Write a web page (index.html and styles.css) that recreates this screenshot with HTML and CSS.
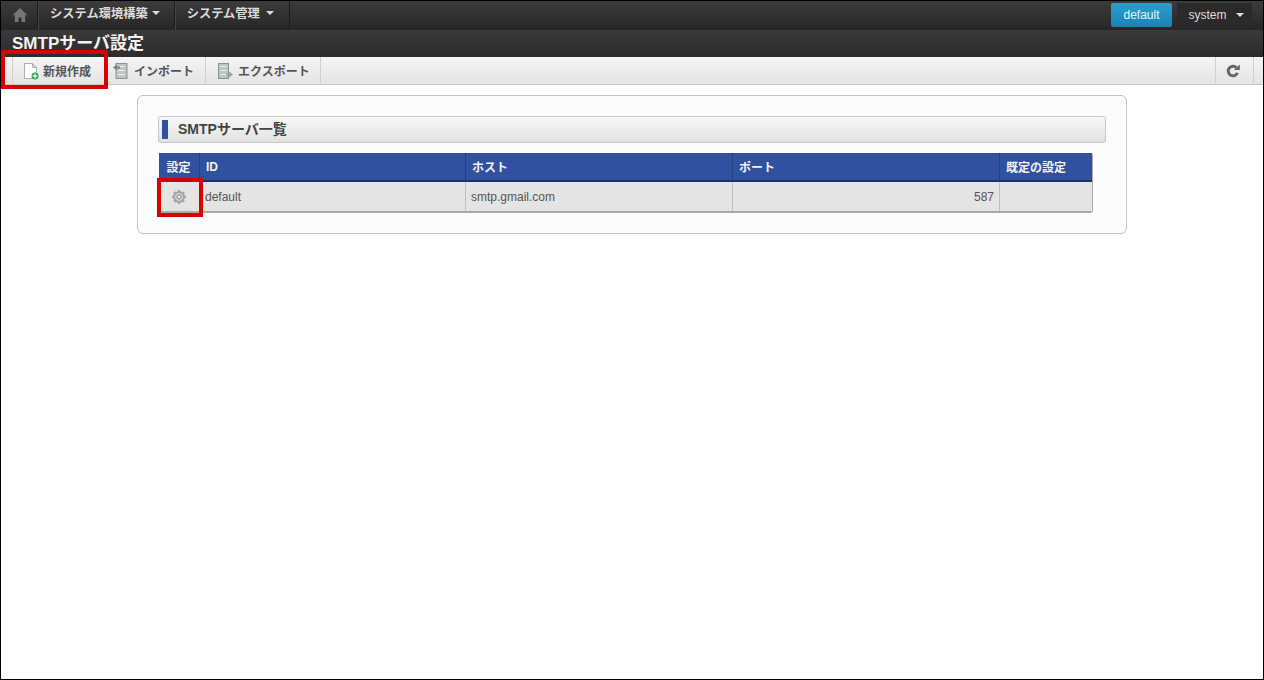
FILE: index.html
```html
<!DOCTYPE html>
<html lang="ja">
<head>
<meta charset="utf-8">
<title>SMTPサーバ設定</title>
<link rel="stylesheet" href="styles.css">
</head>
<body>
<div class="frame">
  <header class="topbar">
    <a class="nav-home">
      <svg width="16" height="16" viewBox="0 0 16 16"><path fill="#757575" d="M8 1 15.500 8.200h-2.300V15H9.500V10.500H6.500V15H2.800V8.200H.5z"/></svg>
    </a>
    <a class="nav-item">システム環境構築<span class="caret"></span></a>
    <a class="nav-item">システム管理<span class="caret"></span></a>
    <div class="nav-right">
      <a class="tenant">default</a>
      <a class="user">system<span class="caret"></span></a>
    </div>
  </header>
  <div class="titlebar"><h1>SMTPサーバ設定</h1></div>
  <div class="toolbar">
    <a class="tool tool-new">
      <svg width="16" height="18" viewBox="0 0 16 18"><path fill="#fbfbfb" stroke="#a9b0b0" d="M1.500 1.500h8l4 4v11h-12z"/><path fill="#dfe5e5" stroke="#a9b0b0" d="M9.500 1.500v4h4z"/><circle cx="12" cy="14" r="3.500" fill="#2fa84a"/><path stroke="#d9f5dd" stroke-width="1.300" d="M12 11.800v4.400M9.800 14h4.400"/></svg>
      新規作成
      <span class="mark mark-new"></span>
    </a>
    <a class="tool tool-import">
      <svg width="16" height="18" viewBox="0 0 16 18"><rect x="3" y="1.500" width="11" height="15" fill="#bfc5c1" stroke="#8b938f"/><path stroke="#eef0ee" d="M5 4.500h7M5 8.500h7M5 12.500h7"/><path fill="#7a827e" d="M0 5.500 4 2.500v2h3v2H4v2z"/></svg>
      インポート
    </a>
    <a class="tool tool-export">
      <svg width="16" height="18" viewBox="0 0 16 18"><rect x="1.500" y="1.500" width="10" height="15" fill="#bfc5c1" stroke="#8b938f"/><path stroke="#eef0ee" d="M3.500 4.500h6M3.500 8.500h6M3.500 12.500h6"/><path fill="#9aa79d" d="M16 12.500 12 9.500v2H9v2h3v2z"/></svg>
      エクスポート
    </a>
    <a class="tool-reload">
      <svg width="14" height="14" viewBox="0 0 14 14"><path fill="none" stroke="#666" stroke-width="3" d="M11.500 8.800A4.800 4.800 0 1 1 10.400 3.600"/><path fill="#666" d="M8 6h5.800V.4z"/></svg>
    </a>
  </div>
  <main class="content">
    <section class="card">
      <h2 class="section-title">SMTPサーバ一覧</h2>
      <div class="table-wrap">
        <table class="grid">
          <colgroup>
            <col class="c-set"><col class="c-id"><col class="c-host"><col class="c-port"><col class="c-default">
          </colgroup>
          <thead>
            <tr><th>設定</th><th>ID</th><th>ホスト</th><th>ポート</th><th>既定の設定</th></tr>
          </thead>
          <tbody>
            <tr>
              <td class="cell-icon">
                <svg width="16" height="16" viewBox="0 0 16 16"><g fill="#a6a6a6"><circle cx="8" cy="8" r="5.600"/><circle cx="8" cy="2.700" r="1.800"/><circle cx="8" cy="13.300" r="1.800"/><circle cx="2.700" cy="8" r="1.800"/><circle cx="13.300" cy="8" r="1.800"/><circle cx="4.250" cy="4.250" r="1.800"/><circle cx="11.750" cy="4.250" r="1.800"/><circle cx="4.250" cy="11.750" r="1.800"/><circle cx="11.750" cy="11.750" r="1.800"/></g><circle cx="8" cy="8" r="3.400" fill="none" stroke="#e4e4e4" stroke-width="1"/><circle cx="8" cy="8" r="1.300" fill="#e4e4e4"/></svg>
                <span class="mark mark-gear"></span>
              </td>
              <td>default</td>
              <td>smtp.gmail.com</td>
              <td class="num">587</td>
              <td></td>
            </tr>
          </tbody>
        </table>
      </div>
    </section>
  </main>
</div>
</body>
</html>
```
FILE: styles.css
```css
* { box-sizing: border-box; }
html, body { margin: 0; height: 100%; }
body {
  font-family: "Liberation Sans", "Noto Sans CJK JP", sans-serif;
  background: #fff;
  color: #444;
  overflow: hidden;
}
a { color: inherit; text-decoration: none; }
.frame {
  height: 680px;
  border: 1px solid #000;
  display: flex;
  flex-direction: column;
  background: #fff;
}
.topbar {
  height: 29px;
  flex: none;
  display: flex;
  align-items: stretch;
  background: linear-gradient(#3c3c3c, #262626);
  color: #ddd;
  font-size: 12.25px;
  font-weight: bold;
}
.nav-home {
  width: 37px;
  display: flex;
  align-items: center;
  justify-content: center;
  padding: 0 0 2px 2px;
  border-right: 1px solid #1c1c1c;
}
.nav-item {
  display: flex;
  align-items: center;
  padding: 0 14px 5px 11px;
  border-right: 1px solid #1c1c1c;
  border-left: 1px solid #444;
  color: #dcdcdc;
}
.caret {
  display: inline-block;
  margin-left: 4px;
  border-top: 4px solid #ddd;
  border-left: 4px solid transparent;
  border-right: 4px solid transparent;
}
.nav-item + .nav-item { padding-right: 15px; }
.nav-item + .nav-item .caret { margin-left: 6px; }
.nav-right {
  margin-left: auto;
  display: flex;
  align-items: flex-start;
  padding: 2px 11px 0 0;
  gap: 5px;
  font-size: 12px;
  font-weight: normal;
}
.tenant {
  width: 61px;
  height: 24px;
  display: flex;
  align-items: center;
  justify-content: center;
  background: linear-gradient(#2a9fcf, #1a82b4);
  border-radius: 2px;
  color: #e8f4fa;
}
.user {
  width: 75px;
  height: 25px;
  display: flex;
  align-items: center;
  justify-content: center;
  background: #2a2a2a;
  color: #ddd;
  padding: 0 0 1px 3px;
}
.user .caret { margin-left: 9px; }
.titlebar {
  height: 27px;
  flex: none;
  background: linear-gradient(#3a3a3a, #2b2b2b);
  display: flex;
  align-items: center;
  padding: 0 0 4px 11px;
}
.titlebar h1 {
  margin: 0;
  font-size: 17px;
  font-weight: bold;
  color: #f2f2f2;
}
.toolbar {
  height: 28px;
  flex: none;
  display: flex;
  align-items: stretch;
  background: linear-gradient(#f4f4f4, #e4e4e4);
  border-bottom: 1px solid #c8c8c8;
  padding-left: 11px;
  font-size: 12px;
  font-weight: bold;
  color: #555;
}
.tool {
  position: relative;
  display: flex;
  align-items: center;
  gap: 4px;
  border-right: 1px solid #cfcfcf;
}
.tool-new { width: 94px; padding-left: 10px; border-left: 1px solid #cfcfcf; }
.tool-import { width: 100px; padding-left: 7px; gap: 5px; }
.tool-export { width: 115px; padding-left: 11px; gap: 5px; }
.tool-reload {
  margin-left: auto;
  width: 39px;
  margin-right: 9px;
  padding-right: 3px;
  display: flex;
  align-items: center;
  justify-content: center;
  border-left: 1px solid #cfcfcf;
  border-right: 1px solid #cfcfcf;
}
.mark {
  position: absolute;
  border: 4px solid #d90000;
  pointer-events: none;
}
.mark-new { left: -12px; top: -7px; width: 107px; height: 39px; }
.content { flex: 1; padding: 10px 136px 0; }
.card {
  width: 990px;
  height: 139px;
  background: #fcfcfe;
  border: 1px solid #c4c4c4;
  border-radius: 6px;
  padding: 20px 20px 0 20px;
}
.section-title {
  margin: 0;
  height: 27px;
  border: 1px solid #c8c8c8;
  border-radius: 3px;
  background: linear-gradient(#f8f8f8, #e2e2e2);
  font-size: 14px;
  font-weight: bold;
  line-height: 25px;
  color: #444;
  position: relative;
  padding-left: 19px;
}
.section-title::before {
  content: "";
  position: absolute;
  left: 3px;
  top: 3px;
  bottom: 3px;
  width: 6px;
  background: #3050a0;
}
.table-wrap { margin: 10px 0 0 1px; width: 934px; }
.grid {
  width: 934px;
  table-layout: fixed;
  border-collapse: separate;
  border-spacing: 0;
  font-size: 12px;
  border-radius: 3px;
  border-right: 1px solid #aaa;
  border-bottom: 2px solid #aaa;
}
.c-set { width: 41px; }
.c-id { width: 266px; }
.c-host { width: 267px; }
.c-port { width: 267px; }
.grid th {
  height: 29px;
  background: #3050a0;
  color: #f2f2f2;
  text-align: left;
  padding: 0 6px;
  font-weight: bold;
  border-right: 1px solid #253f80;
  border-bottom: 2px solid #1f3266;
}
.grid th:first-child { padding: 0 1px 0 0; text-align: center; }
.grid th:last-child { border-right: 0; }
.grid td {
  height: 29px;
  background: #e4e4e4;
  color: #555;
  padding: 0 5px;
  border-right: 1px solid #c0c0c0;
}
.grid td:last-child { border-right: 0; }
.grid td.num { text-align: right; }
.grid td.cell-icon { position: relative; padding: 0; text-align: center; }
.cell-icon svg { display: block; margin: 0 auto; }
.mark-gear { left: -2px; top: -4px; width: 46px; height: 39px; }
```
